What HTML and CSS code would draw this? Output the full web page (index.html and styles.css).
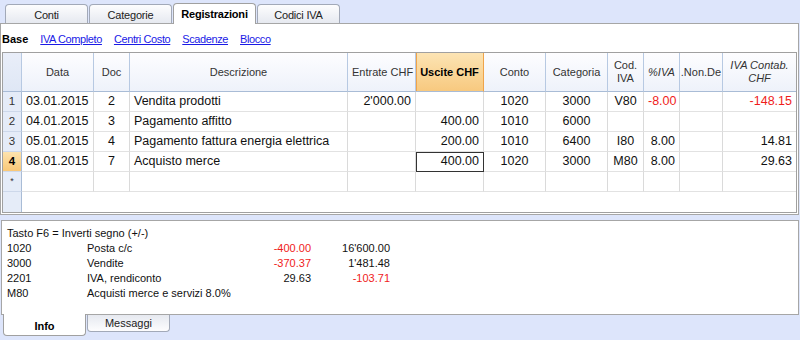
FILE: index.html
```html
<!DOCTYPE html>
<html lang="it">
<head>
    <meta charset="UTF-8">
    <meta name="viewport" content="width=device-width, initial-scale=1.0">
    <title>Registrazioni</title>
    <link rel="stylesheet" href="styles.css">
</head>
<body>
    <div class="tabs">
        <div class="tab">Conti</div>
        <div class="tab">Categorie</div>
        <div class="tab active">Registrazioni</div>
        <div class="tab">Codici IVA</div>
    </div>

    <div class="panel">
        <div class="views">
            <b>Base</b>
            <a href="#">IVA Completo</a>
            <a href="#">Centri Costo</a>
            <a href="#">Scadenze</a>
            <a href="#">Blocco</a>
        </div>

        <div class="grid">
            <table>
                <colgroup>
                    <col style="width:19px">
                    <col style="width:72px">
                    <col style="width:36px">
                    <col style="width:218px">
                    <col style="width:68px">
                    <col style="width:68px">
                    <col style="width:62px">
                    <col style="width:62px">
                    <col style="width:36px">
                    <col style="width:36px">
                    <col style="width:43px">
                    <col style="width:73px">
                </colgroup>
                <thead>
                    <tr>
                        <th class="rn"></th>
                        <th>Data</th>
                        <th>Doc</th>
                        <th>Descrizione</th>
                        <th>Entrate CHF</th>
                        <th class="current">Uscite CHF</th>
                        <th>Conto</th>
                        <th>Categoria</th>
                        <th>Cod.<br>IVA</th>
                        <th class="it">%IVA</th>
                        <th class="clip">.Non.De</th>
                        <th class="it last">IVA Contab.<br>CHF</th>
                    </tr>
                </thead>
                <tbody>
                    <tr>
                        <td class="rn">1</td>
                        <td>03.01.2015</td>
                        <td class="c">2</td>
                        <td>Vendita prodotti</td>
                        <td class="r">2'000.00</td>
                        <td></td>
                        <td class="c">1020</td>
                        <td class="c">3000</td>
                        <td class="c">V80</td>
                        <td class="r neg">-8.00</td>
                        <td></td>
                        <td class="r neg last">-148.15</td>
                    </tr>
                    <tr>
                        <td class="rn">2</td>
                        <td>04.01.2015</td>
                        <td class="c">3</td>
                        <td>Pagamento affitto</td>
                        <td></td>
                        <td class="r">400.00</td>
                        <td class="c">1010</td>
                        <td class="c">6000</td>
                        <td></td>
                        <td></td>
                        <td></td>
                        <td class="last"></td>
                    </tr>
                    <tr>
                        <td class="rn">3</td>
                        <td>05.01.2015</td>
                        <td class="c">4</td>
                        <td>Pagamento fattura energia elettrica</td>
                        <td></td>
                        <td class="r">200.00</td>
                        <td class="c">1010</td>
                        <td class="c">6400</td>
                        <td class="c">I80</td>
                        <td class="r">8.00</td>
                        <td></td>
                        <td class="r last">14.81</td>
                    </tr>
                    <tr>
                        <td class="rn current">4</td>
                        <td>08.01.2015</td>
                        <td class="c">7</td>
                        <td>Acquisto merce</td>
                        <td></td>
                        <td class="r cursor">400.00</td>
                        <td class="c">1020</td>
                        <td class="c">3000</td>
                        <td class="c">M80</td>
                        <td class="r">8.00</td>
                        <td></td>
                        <td class="r last">29.63</td>
                    </tr>
                    <tr>
                        <td class="rn star">*</td>
                        <td></td>
                        <td></td>
                        <td></td>
                        <td></td>
                        <td></td>
                        <td></td>
                        <td></td>
                        <td></td>
                        <td></td>
                        <td></td>
                        <td class="last"></td>
                    </tr>
                </tbody>
            </table>
        </div>
    </div>

    <div class="info">
        <div class="info-line">Tasto F6 = Inverti segno (+/-)</div>
        <div class="info-grid">
            <span>1020</span><span>Posta c/c</span><span class="amt neg">-400.00</span><span class="amt">16'600.00</span>
            <span>3000</span><span>Vendite</span><span class="amt neg">-370.37</span><span class="amt">1'481.48</span>
            <span>2201</span><span>IVA, rendiconto</span><span class="amt">29.63</span><span class="amt neg">-103.71</span>
            <span>M80</span><span>Acquisti merce e servizi 8.0%</span><span></span><span></span>
        </div>
    </div>

    <div class="bottom-tabs">
        <div class="btab active">Info</div>
        <div class="btab">Messaggi</div>
    </div>
</body>
</html>
```

FILE: styles.css
```css
body {
    margin: 0;
    width: 800px;
    height: 340px;
    overflow: hidden;
    background-color: #dde5fb;
    font-family: "Liberation Sans", Arial, sans-serif;
    color: #111;
}

/* top tabs */
.tabs {
    display: flex;
    align-items: flex-end;
    height: 23px;
    padding-left: 5px;
    gap: 1px;
}

.tab {
    box-sizing: border-box;
    width: 83px;
    height: 19px;
    padding-top: 3px;
    line-height: 15px;
    font-size: 11px;
    letter-spacing: -0.2px;
    text-align: center;
    color: #222;
    border: 1px solid #a2a9b8;
    border-bottom: none;
    border-radius: 4px 4px 0 0;
    background: linear-gradient(#fdfdfe, #e6e9f0);
}

.tab.active {
    height: 21px;
    margin-bottom: -1px;
    position: relative;
    z-index: 1;
    font-weight: bold;
    color: #000;
    background: #fff;
    border-color: #a0a0a0;
}

/* main panel */
.panel {
    box-sizing: border-box;
    width: 799px;
    height: 192px;
    background-color: #fff;
    border: 1px solid #a6a6a6;
}

.views {
    box-sizing: border-box;
    height: 28px;
    padding: 8px 0 0 1px;
    display: flex;
    gap: 12px;
    font-size: 11px;
    line-height: 14px;
    letter-spacing: -0.4px;
}

.views b {
    color: #000;
    letter-spacing: 0;
}

.views a {
    color: #1a1ae6;
    text-decoration: underline;
}

.grid {
    box-sizing: border-box;
    width: 795px;
    height: 161px;
    margin-left: 1px;
    border: 1px solid #a0a0a0;
    background: linear-gradient(to right, #e5ecf8 18px, #a9bcd6 18px, #a9bcd6 19px, #fff 19px);
}

table {
    border-collapse: separate;
    border-spacing: 0;
    table-layout: fixed;
    width: 793px;
}

th, td {
    box-sizing: border-box;
    padding: 0 4px;
    white-space: nowrap;
    overflow: hidden;
}

th {
    height: 39px;
    font-size: 11px;
    font-weight: normal;
    line-height: 13px;
    color: #333;
    text-align: center;
    background: linear-gradient(#fdfdff, #eef2fa);
    border-right: 1px solid #b7c9e2;
    border-bottom: 1px solid #a9bcd6;
}

th.it {
    font-style: italic;
}

th.clip {
    padding: 0;
    text-overflow: clip;
}

th.current {
    font-weight: bold;
    color: #000;
    background: linear-gradient(#fce4b4, #f8c97f);
    border-right-color: #efa44a;
    box-shadow: inset 1px 0 0 #efa44a;
}

th.rn {
    background: linear-gradient(#e9eef9, #dfe7f5);
}

td {
    height: 20px;
    font-size: 12.5px;
    line-height: 19px;
    background-color: #fff;
    border-right: 1px solid #dadada;
    border-bottom: 1px solid #e2e2e2;
}

th.last, td.last {
    border-right: none;
}

td.c {
    text-align: center;
}

td.r {
    text-align: right;
    padding-right: 4px;
}

.neg {
    color: #f01c1c;
}

td.rn {
    padding: 0;
    font-size: 11.5px;
    text-align: center;
    color: #333;
    background-color: #e5ecf8;
    border-right: 1px solid #a9bcd6;
    border-bottom: 1px solid #cdd8ea;
}

td.rn.current {
    font-weight: bold;
    color: #000;
    background: linear-gradient(#fde3ae, #f9c877);
}

td.rn.star {
    font-size: 9px;
}

td.cursor {
    outline: 1px solid #333;
    outline-offset: -1px;
}

/* info panel */
.info {
    box-sizing: border-box;
    width: 798px;
    height: 95px;
    margin: 5px 0 0 1px;
    padding: 5px 0 0 5px;
    background-color: #fff;
    border: 1px solid #a6a6a6;
    font-size: 11px;
    line-height: 15px;
    color: #111;
}

.info-grid {
    display: grid;
    grid-template-columns: 80px 140px 84px 79px;
    white-space: nowrap;
}

.info-grid .amt {
    text-align: right;
}

/* bottom tabs */
.bottom-tabs {
    display: flex;
    align-items: flex-start;
    padding-left: 3px;
    gap: 1px;
}

.btab {
    box-sizing: border-box;
    width: 83px;
    height: 17px;
    padding-top: 1px;
    font-size: 11px;
    line-height: 14px;
    text-align: center;
    color: #222;
    border: 1px solid #a2a9b8;
    border-top: none;
    border-radius: 0 0 4px 4px;
    background: linear-gradient(#e6e9f0, #fdfdfe);
}

.btab.active {
    height: 22px;
    margin-top: -1px;
    padding-top: 5px;
    position: relative;
    z-index: 1;
    font-weight: bold;
    color: #000;
    background: #fff;
    border-color: #a0a0a0;
}
```
